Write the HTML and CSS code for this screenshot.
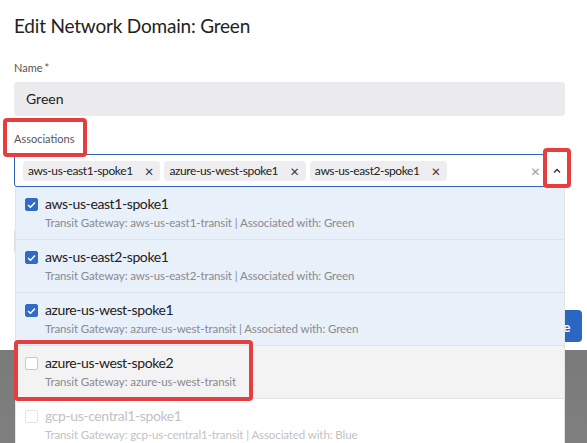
FILE: index.html
```html
<!DOCTYPE html>
<html>
<head>
<meta charset="utf-8">
<link rel="stylesheet" href="styles.css">
</head>
<body>
<div class="modal">
  <h1 class="title">Edit Network Domain: Green</h1>
  <div class="field">
    <label class="label">Name<span class="req">*</span></label>
    <div class="input">Green</div>
  </div>
  <div class="field assoc">
    <label class="label">Associations</label>
    <div class="select">
      <div class="chips">
        <span class="chip">aws-us-east1-spoke1<span class="x">×</span></span>
        <span class="chip">azure-us-west-spoke1<span class="x">×</span></span>
        <span class="chip">aws-us-east2-spoke1<span class="x">×</span></span>
      </div>
      <span class="clear">×</span>
    </div>
    <div class="ghost"></div>
    <div class="footer"><button class="btn">Save</button></div>

    <div class="menu">
      <div class="opt sel">
        <span class="cb on"><svg width="9" height="8" viewBox="0 0 9 8"><path d="M1 4 L3.5 6.3 L8 1.5" fill="none" stroke="#fff" stroke-width="1.5"/></svg></span>
        <div class="txt"><div class="main">aws-us-east1-spoke1</div><div class="sub">Transit Gateway: aws-us-east1-transit | Associated with: Green</div></div>
      </div>
      <div class="opt sel">
        <span class="cb on"><svg width="9" height="8" viewBox="0 0 9 8"><path d="M1 4 L3.5 6.3 L8 1.5" fill="none" stroke="#fff" stroke-width="1.5"/></svg></span>
        <div class="txt"><div class="main">aws-us-east2-spoke1</div><div class="sub">Transit Gateway: aws-us-east2-transit | Associated with: Green</div></div>
      </div>
      <div class="opt sel">
        <span class="cb on"><svg width="9" height="8" viewBox="0 0 9 8"><path d="M1 4 L3.5 6.3 L8 1.5" fill="none" stroke="#fff" stroke-width="1.5"/></svg></span>
        <div class="txt"><div class="main">azure-us-west-spoke1</div><div class="sub">Transit Gateway: azure-us-west-transit | Associated with: Green</div></div>
      </div>
      <div class="opt hover">
        <span class="cb"></span>
        <div class="txt"><div class="main">azure-us-west-spoke2</div><div class="sub">Transit Gateway: azure-us-west-transit</div></div>
      </div>
      <div class="opt dis">
        <span class="cb"></span>
        <div class="txt"><div class="main">gcp-us-central1-spoke1</div><div class="sub">Transit Gateway: gcp-us-central1-transit | Associated with: Blue</div></div>
      </div>
    </div>

    <div class="hl hl-label"></div>
    <div class="hl hl-chev">
      <svg width="8" height="6" viewBox="0 0 8 6"><path d="M1 4.5 L4 1.5 L7 4.5" fill="none" stroke="#333" stroke-width="1.4"/></svg>
    </div>
    <div class="hl hl-opt"></div>
  </div>
</div>
</body>
</html>
```
FILE: styles.css
```css
* { box-sizing: border-box; }
html, body { margin: 0; height: 100%; }
body {
  font-family: "Lato", "Liberation Sans", sans-serif;
  background: linear-gradient(180deg, #666 0%, #7f7f7f 100%);
  overflow: hidden;
}
.modal {
  background: #fff;
  height: 350px;
  padding: 14px 22px 0 14px;
  position: relative;
}
.title {
  margin: 0;
  font-size: 19px;
  font-weight: 400;
  color: #222;
  line-height: 24px;
  letter-spacing: -0.2px;
}
.field { margin-top: 23px; }
.label {
  display: block;
  font-size: 11px;
  color: #555;
  line-height: 14px;
  margin-bottom: 7px;
}
.req { margin-left: 2px; }
.input {
  height: 34px;
  background: #ebebed;
  border-radius: 4px;
  padding: 0 12px;
  font-size: 14px;
  line-height: 34px;
  color: #222;
}
.assoc { margin-top: 16px; position: relative; }
.assoc .label { margin-bottom: 8px; }
.select {
  height: 33px;
  border: 1px solid #2f64b8;
  border-radius: 3px;
  display: flex;
  align-items: center;
  padding: 0 0 0 8px;
}
.chips { display: flex; gap: 4px; flex: 1; }
.chip {
  background: #eeeef1;
  border-radius: 4px;
  height: 20px;
  padding: 0 7px 0 5px;
  font-size: 12px;
  letter-spacing: -0.4px;
  line-height: 20px;
  color: #222;
  display: flex;
  align-items: center;
}
.chip .x { margin-left: 12px; font-size: 15px; color: #333; letter-spacing: 0; }
.clear { color: #999; font-size: 16px; margin-right: 24px; }
.ghost {
  margin-top: 41px;
  height: 27px;
  border: 1px solid #ddd;
  border-radius: 4px;
}
.footer { display: flex; justify-content: flex-end; margin-top: 55px; margin-right: -17px; }
.btn {
  background: #2b66c3;
  color: #fff;
  border: 0;
  border-radius: 4px;
  height: 32px;
  width: 52px;
  font-family: inherit;
  font-size: 14px;
  font-weight: 700;
}
.menu {
  position: absolute;
  left: 1px;
  top: 55px;
  width: 550px;
  background: #fff;
  border-left: 1px solid #e4e4e4;
  border-right: 1px solid #e4e4e4;
}
.opt {
  height: 53px;
  display: flex;
  align-items: flex-start;
  padding: 8px 0 0 9px;
  border-bottom: 1px solid #e2e2e4;
}
.opt.sel { background: #e8f0fa; }
.opt.hover { background: #f3f3f3; }
.cb {
  width: 13px;
  height: 13px;
  border: 1px solid #c8c8cc;
  border-radius: 2px;
  background: #fff;
  margin-top: 3px;
  margin-right: 7px;
  display: flex;
  align-items: center;
  justify-content: center;
}
.cb.on { background: #2f6cc6; border-color: #2f6cc6; }
.main { font-size: 14px; line-height: 18px; color: #222; letter-spacing: -0.4px; }
.sub { font-size: 11.5px; line-height: 16px; color: #8a8a8e; margin-top: 2px; letter-spacing: -0.1px; }
.dis .main, .dis .sub { color: #c2c2c4; }
.dis .cb { border-color: #e4e4e6; }
.hl {
  position: absolute;
  border: 4px solid #e53e3e;
  border-radius: 4px;
}
.hl-label { left: -11px; top: -14px; width: 84px; height: 39px; }
.hl-chev {
  left: 529px; top: 16px; width: 28px; height: 40px;
  background: #fff;
  display: flex; align-items: center; justify-content: center;
  padding-top: 6px;
}
.hl-opt { left: 0; top: 208px; width: 239px; height: 61px; }
```
